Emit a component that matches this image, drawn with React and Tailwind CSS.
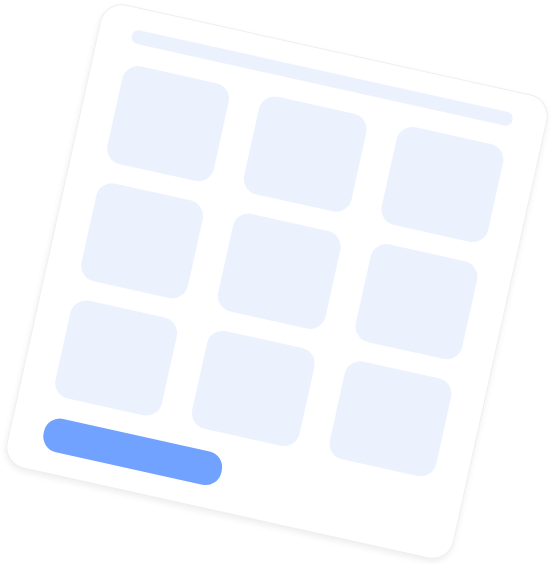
export default function App() {
  const tiles = Array.from({ length: 9 });

  return (
    <div className="w-[552px] h-[564px] bg-white flex items-center justify-center overflow-hidden">
      <div className="w-[458px] h-[475px] rotate-[12.5deg] translate-x-[1px] -translate-y-[1px] bg-white rounded-[22px] border border-[#efefef] shadow-[0_3px_6px_rgba(0,0,0,0.07)] px-[33px] pt-[21px] flex flex-col">
        {/* title bar */}
        <div className="h-[14px] w-full rounded-full bg-[#ebf2fe]" />

        {/* tile grid */}
        <div className="mt-[21px] grid grid-cols-3 gap-x-[31px] gap-y-[20px]">
          {tiles.map((_, i) => (
            <div key={i} className="h-[100px] rounded-[16px] bg-[#ebf2fe]" />
          ))}
        </div>

        {/* action button */}
        <div className="mt-[21px] w-[182px] h-[34px] rounded-[16px] bg-[#71a2ff]" />
      </div>
    </div>
  );
}
